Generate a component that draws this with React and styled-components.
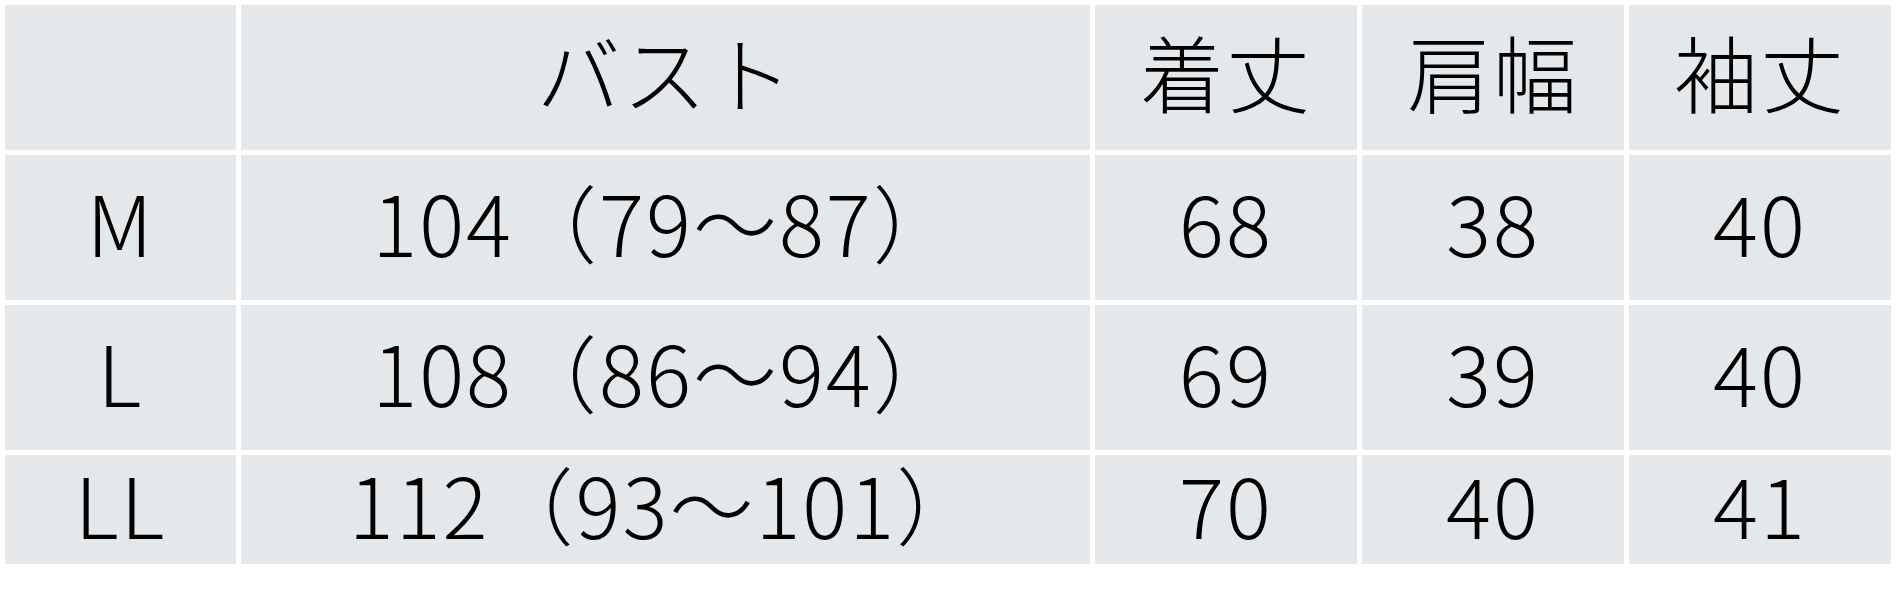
import styled, { createGlobalStyle } from "styled-components";

const GlobalStyle = createGlobalStyle`
  body {
    margin: 0;
    background: #fff;
    font-family: "Noto Sans CJK JP", "Noto Sans", sans-serif;
    color: #000;
  }
`;

const rows = [
  ["M", "104（79～87）", "68", "38", "40"],
  ["L", "108（86～94）", "69", "39", "40"],
  ["LL", "112（93～101）", "70", "40", "41"],
];

const headers = ["", "バスト", "着丈", "肩幅", "袖丈"];

const App = () => {
  return (
    <>
      <GlobalStyle />
      <Table>
        {headers.map((h, i) => (
          <Cell key={`h${i}`} $tall>
            {h}
          </Cell>
        ))}
        {rows.map((row, r) =>
          row.map((v, c) => (
            <Cell key={`${r}-${c}`} $tall={r < 2}>
              {v}
            </Cell>
          ))
        )}
      </Table>
    </>
  );
};
export default App;

const Table = styled.div`
  display: grid;
  grid-template-columns: 231px 849px 262px 262px 262px;
  column-gap: 5px;
  row-gap: 5px;
  padding: 5px;
`;

const Cell = styled.div`
  box-sizing: border-box;
  height: ${({ $tall }) => ($tall ? "145px" : "109px")};
  padding-bottom: 14px;
  background-color: #e5e8eb;
  display: flex;
  align-items: center;
  justify-content: center;
  font-size: 84px;
  font-weight: 300;
  letter-spacing: 2px;
  line-height: 1;
  white-space: nowrap;
`;
